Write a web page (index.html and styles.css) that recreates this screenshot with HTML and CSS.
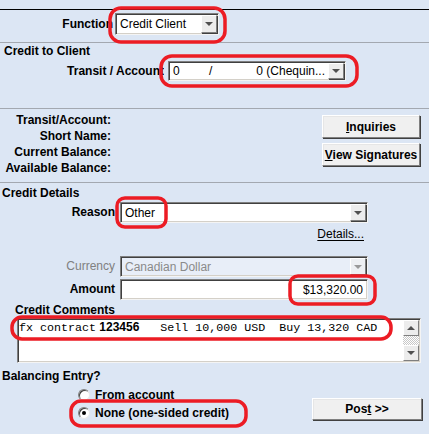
FILE: index.html
```html
<!DOCTYPE html>
<html>
<head>
<meta charset="utf-8">
<link rel="stylesheet" href="styles.css">
</head>
<body>
<div class="topline"></div>

<div class="sec sec-function">
  <div class="lbl lbl-func">Function</div>
  <div class="field sel-function">
    <span class="val">Credit Client</span>
    <span class="dd"><i class="tri"></i></span>
  </div>
</div>

<div class="sec sec-client">
  <h3 class="hd hd-client">Credit to Client</h3>
  <div class="row-transit">
    <div class="lbl lbl-transit">Transit / Account</div>
    <div class="field sel-transit">
      <span class="t-a">0</span>
      <span class="t-slash">/</span>
      <span class="t-b">0 (Chequin...</span>
      <span class="dd"><i class="tri"></i></span>
    </div>
  </div>
</div>

<div class="sec sec-info">
  <div class="info-labels">
    <div>Transit/Account:</div>
    <div>Short Name:</div>
    <div>Current Balance:</div>
    <div>Available Balance:</div>
  </div>
  <div class="info-buttons">
    <div class="btn"><span><u>I</u>nquiries</span></div>
    <div class="btn"><span><u>V</u>iew Signatures</span></div>
  </div>
</div>

<div class="sec-details">
  <h3 class="hd hd-details">Credit Details</h3>
  <div class="frow frow-reason">
    <div class="lbl lbl-col">Reason</div>
    <div class="field sel-wide">
      <span class="val">Other</span>
      <span class="dd"><i class="tri"></i></span>
    </div>
  </div>
  <div class="details-row"><span class="link">Details...</span></div>
  <div class="frow frow-currency">
    <div class="lbl lbl-col lbl-dis">Currency</div>
    <div class="field sel-wide field-dis">
      <span class="val">Canadian Dollar</span>
      <span class="dd dd-dis"><i class="tri"></i></span>
    </div>
  </div>
  <div class="frow frow-amount">
    <div class="lbl lbl-col">Amount</div>
    <div class="field sel-wide amount"><span class="amt">$13,320.00</span></div>
  </div>
  <h3 class="hd hd-comments">Credit Comments</h3>
  <div class="field comments">
    <div class="ctext"><span class="mono">fx contract</span><b class="cbold"> 123456</b><span class="mono">   Sell 10,000 USD  Buy 13,320 CAD</span></div>
    <div class="vscroll">
      <span class="sbtn"><i class="tri tri-up"></i></span>
      <span class="strack"></span>
      <span class="sbtn"><i class="tri"></i></span>
    </div>
  </div>
  <h3 class="hd hd-balance">Balancing Entry?</h3>
  <div class="balance-row">
    <div class="radios">
      <div class="radio-row"><span class="radio"></span><span class="rlbl">From account</span></div>
      <div class="radio-row"><span class="radio on"></span><span class="rlbl">None (one-sided credit)</span></div>
    </div>
    <div class="btn btn-post"><span>Pos<u>t</u> &gt;&gt;</span></div>
  </div>
</div>

<svg class="marks" width="429" height="434" viewBox="0 0 429 434">
  <rect x="110" y="8" width="115" height="34" rx="11" />
  <rect x="161" y="56" width="196" height="30" rx="11" />
  <rect x="117" y="198" width="49" height="29" rx="8" />
  <rect x="290" y="276" width="85" height="28" rx="8" />
  <rect x="12" y="317" width="379" height="22" rx="10" />
  <rect x="71" y="401" width="175" height="25" rx="10" />
</svg>
</body>
</html>
```

FILE: styles.css
```css
* { box-sizing: border-box; margin: 0; padding: 0; }
html, body { width: 429px; height: 434px; overflow: hidden; }
body {
  background: #dce6f4;
  font: 12px/14px "Liberation Sans", Arial, sans-serif;
  color: #000;
  position: relative;
}
.topline { height: 10px; border-bottom: 1px solid #000; }
.sec { border-bottom: 1px solid #a3a8b0; }

.lbl { font-weight: bold; text-align: right; white-space: nowrap; }
.hd { font-size: 12px; font-weight: bold; line-height: 14px; }

/* generic sunken field */
.field {
  position: relative;
  display: flex;
  align-items: center;
  background: #fff;
  border: 1px solid;
  border-color: #7f7f7f #f4f4f4 #f4f4f4 #7f7f7f;
  box-shadow: inset 1px 1px 0 #404040, inset -1px -1px 0 #d4d0c8;
  white-space: nowrap;
  overflow: hidden;
}
.field .val { flex: 1; padding-left: 3px; }
.dd {
  width: 16px;
  align-self: stretch;
  margin: 1px 1px 1px 0;
  background: #ececec;
  border: 1px solid;
  border-color: #ffffff #7f7f7f #7f7f7f #ffffff;
  box-shadow: 1px 1px 0 #404040;
  display: flex;
  align-items: center;
  justify-content: center;
}
.tri {
  width: 0; height: 0;
  border-left: 4px solid transparent;
  border-right: 4px solid transparent;
  border-top: 4px solid #505050;
}
.tri-up { border-top: 0; border-bottom: 4px solid #505050; }

/* function row */
.sec-function { height: 33px; display: flex; align-items: flex-start; padding-top: 3px; }
.lbl-func { width: 113px; line-height: 22px; }
.sel-function { margin-left: 2px; width: 104px; height: 22px; }
.sel-function .val { padding-left: 4px; }

/* credit to client */
.sec-client { height: 66px; padding-top: 1px; }
.hd-client { padding-left: 4px; }
.row-transit { display: flex; margin-top: 3px; }
.lbl-transit { width: 164px; line-height: 20px; overflow: hidden; }
.sel-transit { margin-left: 4px; width: 178px; height: 20px; }
.t-a { width: 40px; padding-left: 4px; }
.t-slash { width: 10px; }
.t-b { flex: 1; text-align: right; padding-right: 3px; }

/* info */
.sec-info { height: 74px; display: flex; justify-content: space-between; }
.info-labels { width: 111px; text-align: right; font-weight: bold; line-height: 16px; padding-top: 3px; }
.info-buttons { display: flex; flex-direction: column; gap: 5px; padding-top: 6px; margin-right: 9px; }
.btn {
  width: 98px; height: 23px;
  background: #f0f0f0;
  border: 1px solid;
  border-color: #ffffff #808080 #808080 #ffffff;
  box-shadow: 1px 1px 0 #404040, inset 1px 1px 0 #e6e6e6;
  font-weight: bold;
  display: flex; align-items: center; justify-content: center;
  white-space: pre;
}
.btn u { text-decoration: underline; text-underline-offset: 1px; }

/* credit details */
.sec-details { padding-top: 3px; }
.hd-details { padding-left: 2px; }
.frow { display: flex; height: 21px; }
.frow-reason { margin-top: 2px; }
.lbl-col { width: 115px; line-height: 21px; }
.sel-wide { margin-left: 5px; width: 248px; height: 21px; }
.sel-wide .val { padding-left: 4px; }
.details-row { margin-top: 4px; height: 14px; text-align: right; padding-right: 65px; }
.link { text-decoration: underline; text-underline-offset: 2px; }
.frow-currency { margin-top: 15px; }
.lbl-dis { font-weight: normal; color: #808080; }
.field-dis { background: #e8eef8; color: #8a8a8a; }
.dd-dis .tri { border-top-color: #9a9a9a; }
.dd-dis { background: #eef0f3; }
.frow-amount { margin-top: 2px; }
.amount { justify-content: flex-end; }
.amt { padding-right: 4px; }

.hd-comments { margin-top: 3px; padding-left: 15px; }
.comments {
  margin: 1px 0 0 17px;
  width: 404px; height: 45px;
  align-items: stretch;
}
.ctext { flex: 1; padding: 1px 0 0 1px; line-height: 14px; white-space: pre; }
.mono { font-family: "Liberation Mono", "Courier New", monospace; font-size: 11.67px; }
.cbold { font-weight: bold; }
.vscroll { width: 16px; display: flex; flex-direction: column; margin: 1px 1px 1px 0; }
.sbtn {
  height: 16px;
  background: #ececec;
  border: 1px solid;
  border-color: #ffffff #7f7f7f #7f7f7f #ffffff;
  display: flex; align-items: center; justify-content: center;
}
.strack {
  flex: 1;
  background-color: #ffffff;
  background-image: repeating-conic-gradient(#c8c8c8 0 25%, #ffffff 0 50%);
  background-size: 2px 2px;
}

.hd-balance { margin-top: 6px; padding-left: 2px; }
.balance-row { display: flex; justify-content: space-between; margin-top: 4px; }
.radios { display: flex; flex-direction: column; gap: 2px; padding-left: 78px; }
.radio-row { display: flex; align-items: center; height: 16px; gap: 5px; font-weight: bold; }
.radio {
  width: 12px; height: 12px; border-radius: 50%;
  background: #fff;
  border: 1px solid;
  border-color: #808080 #e8e8e8 #e8e8e8 #808080;
  box-shadow: inset 1px 1px 0 #404040;
  display: flex; align-items: center; justify-content: center;
}
.radio.on::after {
  content: "";
  width: 4px; height: 4px; border-radius: 50%;
  background: #000;
}
.btn-post { width: 110px; height: 22px; margin-top: 11px; margin-right: 7px; font-weight: bold; }

.marks { position: absolute; left: 0; top: 0; pointer-events: none; }
.marks rect { fill: none; stroke: #ec1c24; stroke-width: 3.5; }
```
